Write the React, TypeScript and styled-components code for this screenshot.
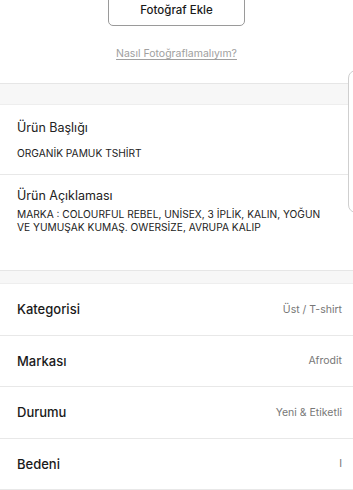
import React from "react";
import styled, { createGlobalStyle } from "styled-components";

const Global = createGlobalStyle`
  html, body { margin: 0; padding: 0; background: #fff; }
  body { font-family: Inter, "Noto Sans", sans-serif; color: #222; overflow: hidden; }
  * { box-sizing: border-box; }
`;

const Page = styled.div`
  position: relative;
  width: 353px;
  height: 490px;
  overflow: hidden;
  background: #fff;
`;

const PhotoArea = styled.div`
  display: flex;
  flex-direction: column;
  align-items: center;
  margin-top: -12px;
  height: 95px;
`;

const AddButton = styled.button`
  width: 137px;
  height: 38px;
  border: 1px solid #9a9a9a;
  border-radius: 5px;
  background: #fff;
  font-family: Inter, sans-serif;
  font-size: 11.5px;
  font-weight: 500;
  color: #1a1a1a;
  padding: 0;
  padding-top: 6px;
`;

const HowLink = styled.a`
  margin-top: 21px;
  font-size: 10.5px;
  color: #a0a0a0;
  text-decoration: underline;
  text-underline-offset: 2px;
`;

const Band = styled.div<{ $h: number }>`
  height: ${(p) => p.$h}px;
  background: #f7f7f7;
  border-top: 1px solid #e6e6e6;
  border-bottom: 1px solid #eeeeee;
`;

const Field = styled.div<{ $h: number; $top: number; $line?: boolean }>`
  height: ${(p) => p.$h}px;
  padding: ${(p) => p.$top}px 17px 0;
  border-bottom: ${(p) => (p.$line ? "1px solid #e8e8e8" : "none")};
`;

const FieldLabel = styled.div`
  font-size: 12.5px;
  line-height: 17px;
  color: #222;
`;

const FieldValue = styled.div<{ $gap: number }>`
  margin-top: ${(p) => p.$gap}px;
  font-size: 10.2px;
  line-height: 13px;
  color: #222;
`;

const Row = styled.div`
  height: 51.5px;
  display: flex;
  align-items: center;
  justify-content: space-between;
  padding: 0 11px 0 17px;
  border-bottom: 1px solid #e8e8e8;
`;

const RowLabel = styled.span`
  font-size: 13px;
  font-weight: 500;
  color: #1a1a1a;
`;

const RowValue = styled.span`
  font-size: 10.5px;
  color: #777;
`;

const ScrollHint = styled.div`
  position: absolute;
  left: 348px;
  top: 70px;
  width: 30px;
  height: 143px;
  border: 1px solid #cfcfcf;
  border-radius: 8px;
  background: #fff;
`;

const rows = [
  ["Kategorisi", "Üst / T-shirt"],
  ["Markası", "Afrodit"],
  ["Durumu", "Yeni & Etiketli"],
  ["Bedeni", "I"],
];

export default function App() {
  return (
    <Page>
      <Global />
      <PhotoArea>
        <AddButton>Fotoğraf Ekle</AddButton>
        <HowLink>Nasıl Fotoğraflamalıyım?</HowLink>
      </PhotoArea>
      <Band $h={22} />
      <Field $h={70} $top={14} $line>
        <FieldLabel>Ürün Başlığı</FieldLabel>
        <FieldValue $gap={11}>ORGANİK PAMUK TSHİRT</FieldValue>
      </Field>
      <Field $h={95} $top={12}>
        <FieldLabel>Ürün Açıklaması</FieldLabel>
        <FieldValue $gap={4}>
          MARKA : COLOURFUL REBEL, UNİSEX, 3 İPLİK, KALIN, YOĞUN
          <br />
          VE YUMUŞAK KUMAŞ. OWERSİZE, AVRUPA KALIP
        </FieldValue>
      </Field>
      <Band $h={14} />
      {rows.map(([l, v]) => (
        <Row key={l}>
          <RowLabel>{l}</RowLabel>
          <RowValue>{v}</RowValue>
        </Row>
      ))}
      <ScrollHint />
    </Page>
  );
}
